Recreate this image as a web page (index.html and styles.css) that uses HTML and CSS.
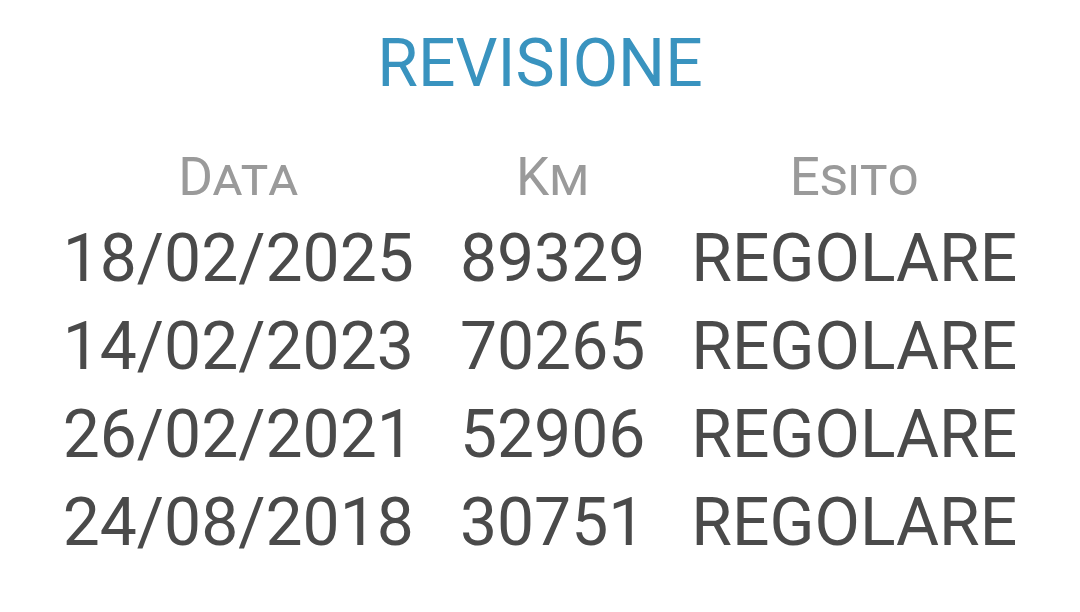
FILE: index.html
```html
<!DOCTYPE html>
<html lang="it">
<head>
    <meta charset="UTF-8">
    <meta name="viewport" content="width=device-width, initial-scale=1.0">
    <title>Revisione</title>
    <link rel="stylesheet" href="styles.css">
</head>
<body>
    <div class="revisione">
        <h1 class="title">REVISIONE</h1>

        <table class="history">
            <thead>
                <tr>
                    <th>Data</th>
                    <th>Km</th>
                    <th>Esito</th>
                </tr>
            </thead>
            <tbody>
                <tr>
                    <td>18/02/2025</td>
                    <td>89329</td>
                    <td>REGOLARE</td>
                </tr>
                <tr>
                    <td>14/02/2023</td>
                    <td>70265</td>
                    <td>REGOLARE</td>
                </tr>
                <tr>
                    <td>26/02/2021</td>
                    <td>52906</td>
                    <td>REGOLARE</td>
                </tr>
                <tr>
                    <td>24/08/2018</td>
                    <td>30751</td>
                    <td>REGOLARE</td>
                </tr>
            </tbody>
        </table>
    </div>
</body>
</html>
```

FILE: styles.css
```css
* {
    box-sizing: border-box;
    font-family: Roboto, 'Noto Sans', sans-serif;
}

body {
    background-color: #fff;
    margin: 0;
    padding: 0;
}

.revisione {
    display: flex;
    flex-direction: column;
    align-items: center;
    padding-top: 24px;
}

.title {
    margin: 0;
    font-size: 66px;
    line-height: 80px;
    font-weight: 400;
    color: #3993bf;
}

.history {
    border-collapse: collapse;
    margin-top: 43px;
}

.history th {
    padding: 0 23px 8px;
    font-size: 53px;
    line-height: 60px;
    font-weight: 400;
    font-variant: small-caps;
    color: #9a9a9a;
    text-align: center;
}

.history td {
    padding: 0 23px;
    font-size: 66px;
    line-height: 88px;
    color: #4a4a4a;
    text-align: center;
    white-space: nowrap;
}
```
